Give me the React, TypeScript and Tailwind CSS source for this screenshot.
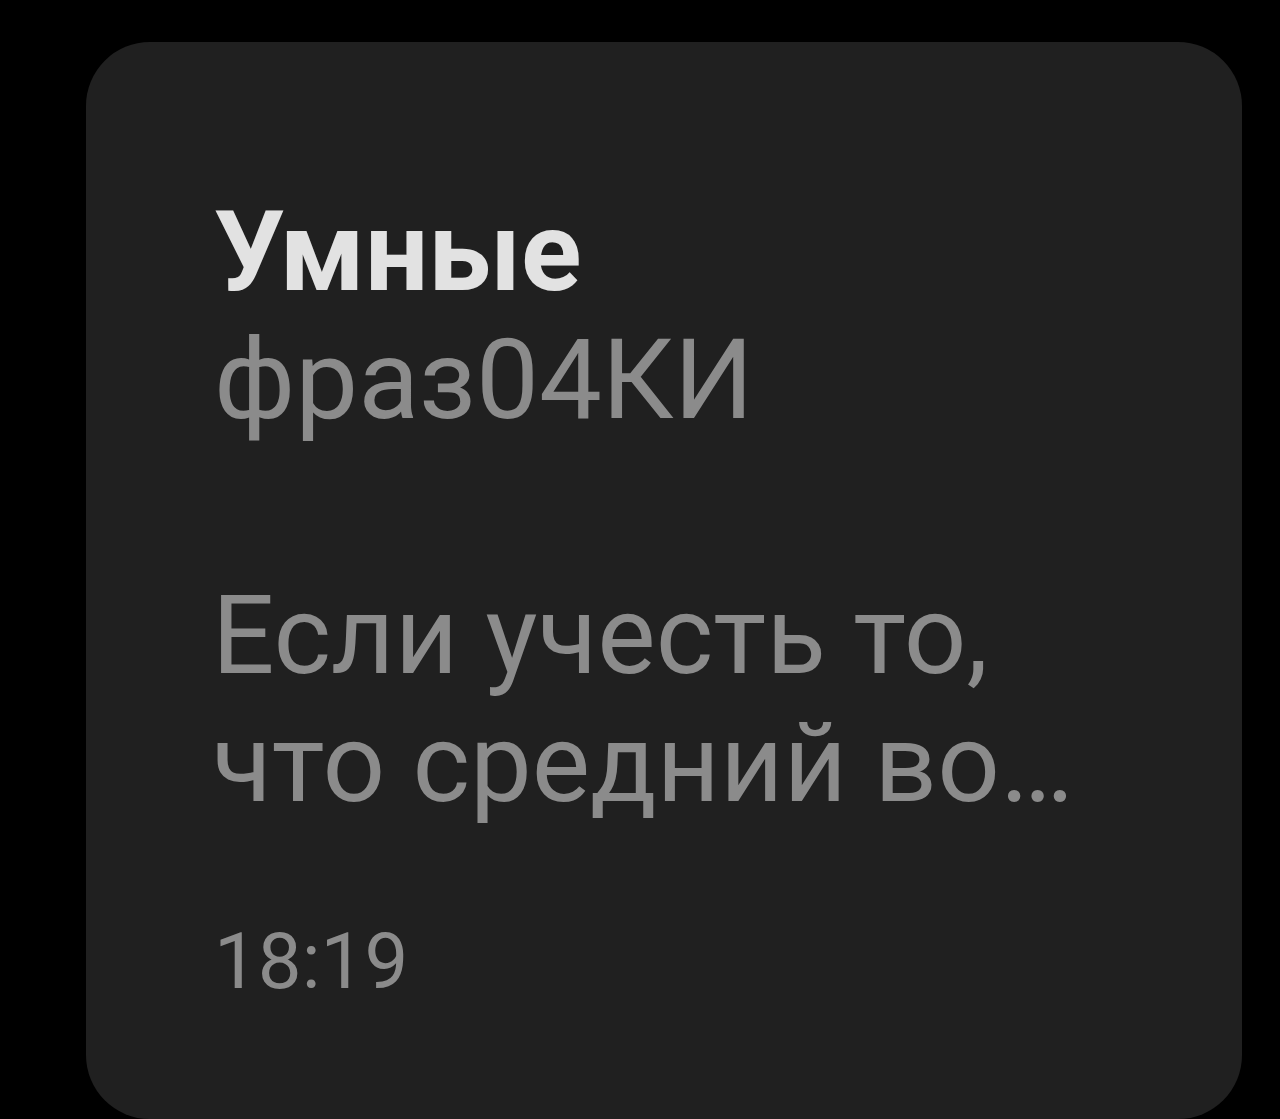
import React from "react";

export default function App() {
  return (
    <div className="w-[1280px] h-[1119px] bg-black overflow-hidden" style={{ fontFamily: "Roboto, 'Noto Sans', sans-serif" }}>
      <div className="ml-[86px] mt-[42px] w-[1156px] h-[1077px] rounded-[64px] bg-[#202020] pl-[128px] pt-[146px]">
        <div className="text-[112px] leading-[128px] font-bold text-[#e2e2e2]">Умные</div>
        <div className="text-[112px] leading-[128px] text-[#8b8b8b]">фраз04КИ</div>
        <div className="h-[128px]" />
        <div className="-ml-[2px] text-[110px] leading-[128px] text-[#8b8b8b]">Если учесть то,</div>
        <div className="-ml-[2px] text-[110px] leading-[128px] text-[#8b8b8b]">что средний во…</div>
        <div className="mt-[90px] text-[78px] leading-[88px] text-[#8b8b8b]">18:19</div>
      </div>
    </div>
  );
}
